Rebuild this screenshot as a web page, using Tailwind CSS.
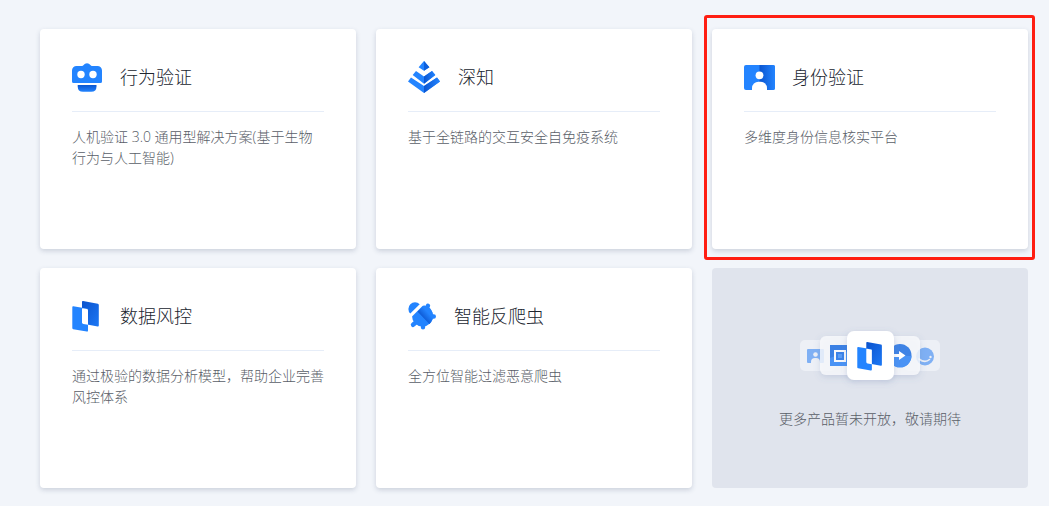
<!DOCTYPE html>
<html lang="zh-CN">
<head>
  <meta charset="UTF-8" />
  <meta name="viewport" content="width=device-width, initial-scale=1.0" />
  <title>产品列表</title>
  <script src="https://cdn.jsdelivr.net/npm/@tailwindcss/browser@4"></script>
</head>
<body class="bg-[#f2f5fa] min-h-screen font-['Open_Sans','Noto_Sans_CJK_SC',sans-serif] font-light">

  <!-- Shared gradients and the panel logo -->
  <svg class="absolute w-0 h-0" aria-hidden="true">
    <defs>
      <linearGradient id="shade" x1="0" y1="0" x2="1" y2="1">
        <stop offset="0" stop-color="#0a52cc" />
        <stop offset="1" stop-color="#1c78f5" />
      </linearGradient>
      <linearGradient id="shade-down" x1="0" y1="0" x2="0" y2="1">
        <stop offset="0" stop-color="#0b56d0" />
        <stop offset="1" stop-color="#2384ff" />
      </linearGradient>
      <linearGradient id="shade-right" x1="0" y1="0" x2="1" y2="0">
        <stop offset="0" stop-color="#0b55d0" />
        <stop offset="1" stop-color="#2384ff" />
      </linearGradient>
      <linearGradient id="shade-up" x1="0" y1="1" x2="1" y2="0">
        <stop offset=".3" stop-color="#0b55d0" />
        <stop offset=".65" stop-color="#2384ff" />
      </linearGradient>
      <clipPath id="shell"><path d="M-1 21.500L20.500 0H30v32H-1z" /></clipPath>
      <symbol id="panels" viewBox="0 0 28 32">
        <path d="M11 1l14.800 2.700q1 .2 1 1.200v20.600q0 1.100-1.100 .9L10 23.500V1.900q0-1.100 1-.9z" fill="url(#shade)" />
        <path d="M1.300 6.200L16 8.800v21.800q0 1.200-1.200 1L1.200 29.200q-.9-.2-.9-1.100V7.100q0-1 1-.9z" fill="#2384ff" />
        <path d="M10.700 8.200l4.300.8q1 .2 1 1.200v14.600l-4.600-.8q-1.400-.3-1.400-1.600V9q0-.9.700-.8z" fill="#fff" />
      </symbol>
    </defs>
  </svg>

  <!-- Product cards -->
  <main class="grid grid-cols-3 gap-x-5 gap-y-[19px] pt-[29px] pb-[18px] pl-10 pr-[21px]">

    <section class="h-[220px] bg-white rounded px-8 pt-8 shadow-[0_2px_5px_rgba(50,65,100,0.2)]">
      <div class="flex items-center gap-4 pb-[18px] border-b border-[#e6edf8]">
        <svg class="w-8 h-8" viewBox="0 0 32 32" aria-hidden="true">
          <path d="M4.500 5H10q1-.1 1.600-1a4.200 4.200 0 0 1 6.800 0q.6.900 1.600 1h5.500A4.500 4.500 0 0 1 30 9.500V20.500a1.500 1.500 0 0 1-1.500 1.500h-27A1.500 1.500 0 0 1 0 20.500V9.500A4.500 4.500 0 0 1 4.500 5z" fill="#2384ff" />
          <circle cx="9" cy="13.500" r="3.700" fill="#fff" />
          <circle cx="21" cy="13.500" r="3.700" fill="#fff" />
          <path d="M5.700 24h18.800v1.500q0 5.300-5.300 5.300H11q-5.300 0-5.300-5.300z" fill="url(#shade-down)" />
        </svg>
        <h2 class="text-lg leading-8 text-[#20242e]">行为验证</h2>
      </div>
      <p class="mt-3.5 text-sm leading-[21px] text-[#595e68]">人机验证 3.0 通用型解决方案(基于生物行为与人工智能)</p>
    </section>

    <section class="h-[220px] bg-white rounded px-8 pt-8 shadow-[0_2px_5px_rgba(50,65,100,0.2)]">
      <div class="flex items-center gap-4 pb-[18px] border-b border-[#e6edf8]">
        <svg class="w-[34px] h-8" viewBox="0 0 34 32" aria-hidden="true">
          <path d="M16 0l5.400 6.300L16 9.800l-5.400-3.500z" fill="#2384ff" />
          <path d="M8 10l8 5.500 8-5.500 3.300 4.100L16 22.800 4.700 14.100z" fill="#2384ff" />
          <path d="M3 16.600L16 25l13-8.400 3 4L16 32 0 20.600z" fill="#2384ff" />
          <path d="M16 0l5.400 6.300L16 9.800z" fill="#0d5fdc" />
          <path d="M16 15.500l8-5.500 3.300 4.100L16 22.800z" fill="url(#shade-right)" />
          <path d="M16 25l13-8.400 3 4L16 32z" fill="url(#shade-right)" />
        </svg>
        <h2 class="text-lg leading-8 text-[#20242e]">深知</h2>
      </div>
      <p class="mt-3.5 text-sm leading-[21px] text-[#595e68]">基于全链路的交互安全自免疫系统</p>
    </section>

    <section class="relative h-[220px] bg-white rounded px-8 pt-8 shadow-[0_2px_5px_rgba(50,65,100,0.2)]">
      <div class="flex items-center gap-4 pb-[18px] border-b border-[#e6edf8]">
        <svg class="w-8 h-8" viewBox="0 0 32 32" aria-hidden="true">
          <rect y="4" width="31" height="25" rx="2" fill="#2384ff" />
          <path d="M15.500 4H29q2 0 2 2v21q0 2-2 2H15.500z" fill="url(#shade-right)" />
          <circle cx="15.500" cy="14.300" r="3.900" fill="#fff" />
          <path d="M8 29v-1.800a6.500 6.500 0 0 1 6.500-6.500h2a6.500 6.500 0 0 1 6.500 6.500V29z" fill="#fff" />
        </svg>
        <h2 class="text-lg leading-8 text-[#20242e]">身份验证</h2>
      </div>
      <p class="mt-3.5 text-sm leading-[21px] text-[#595e68]">多维度身份信息核实平台</p>
      <!-- Highlight frame -->
      <div class="absolute -left-2 -top-3.5 -right-[7px] -bottom-[11px] border-3 border-[#ff1e12] rounded-[3px] pointer-events-none"></div>
    </section>

    <section class="h-[220px] bg-white rounded px-8 pt-8 shadow-[0_2px_5px_rgba(50,65,100,0.2)]">
      <div class="flex items-center gap-5 pb-[18px] border-b border-[#e6edf8]">
        <svg class="w-7 h-8" aria-hidden="true"><use href="#panels" /></svg>
        <h2 class="text-lg leading-8 text-[#20242e]">数据风控</h2>
      </div>
      <p class="mt-3.5 text-sm leading-[21px] text-[#595e68]">通过极验的数据分析模型，帮助企业完善风控体系</p>
    </section>

    <section class="h-[220px] bg-white rounded px-8 pt-8 shadow-[0_2px_5px_rgba(50,65,100,0.2)]">
      <div class="flex items-center gap-4 pb-[18px] border-b border-[#e6edf8]">
        <svg class="w-[30px] h-8" viewBox="0 0 30 32" aria-hidden="true">
          <path d="M2.300 13.600A6.300 6.300 0 1 1 11.700 4.300z" fill="#2384ff" />
          <g clip-path="url(#shell)">
            <path d="M15 16.500L20 5.700M15 16.500h10.800M15 16.500v10.800M15 16.500L5 24.800" fill="none" stroke="#2384ff" stroke-width="4.400" stroke-linecap="round" />
            <circle cx="14.500" cy="16" r="10.500" fill="#2384ff" />
            <path d="M9.500 11.500L21.400 23.900A10.500 10.500 0 0 0 16 5.600z" fill="url(#shade-up)" />
          </g>
        </svg>
        <h2 class="text-lg leading-8 text-[#20242e]">智能反爬虫</h2>
      </div>
      <p class="mt-3.5 text-sm leading-[21px] text-[#595e68]">全方位智能过滤恶意爬虫</p>
    </section>

    <!-- Coming soon -->
    <section class="h-[220px] bg-[#e0e4ed] rounded flex flex-col items-center pt-[52px]">
      <svg class="w-40 h-[70px]" viewBox="0 0 160 70" aria-hidden="true">
        <defs>
          <filter id="lift" x="-30%" y="-30%" width="160%" height="170%">
            <feDropShadow dx="0" dy="2" stdDeviation="3" flood-color="#5b74a8" flood-opacity=".25" />
          </filter>
        </defs>
        <rect x="10" y="20" width="36" height="31" rx="5" fill="#edf0f6" />
        <rect x="114" y="20" width="36" height="31" rx="5" fill="#edf0f6" />
        <g fill="#7fb0f4">
          <rect x="17" y="29" width="17" height="14" rx="1" />
          <circle cx="135" cy="36.500" r="9" />
        </g>
        <circle cx="25.500" cy="34.500" r="2.300" fill="#edf0f6" />
        <path d="M21 43v-1a4 4 0 0 1 4-4h1a4 4 0 0 1 4 4v1z" fill="#edf0f6" />
        <path d="M129 39q6 4.500 10.500 .5" fill="none" stroke="#edf0f6" stroke-width="1.600" stroke-linecap="round" />
        <circle cx="140.500" cy="37" r="1.200" fill="#edf0f6" />
        <rect x="30" y="16" width="40" height="39" rx="6" fill="#f9fafc" fill-opacity=".8" filter="url(#lift)" />
        <rect x="90" y="16" width="40" height="39" rx="6" fill="#f9fafc" fill-opacity=".8" filter="url(#lift)" />
        <rect x="40" y="25" width="21" height="21" fill="#4a93f5" />
        <path d="M40 25h21v5L40 38z" fill="#3b80e4" />
        <rect x="44" y="30" width="12" height="12" fill="#f7f8fb" />
        <rect x="46" y="32" width="8" height="8" fill="#3b82e8" />
        <rect x="48" y="34" width="4" height="4" fill="#5b9df5" />
        <circle cx="110" cy="35.500" r="11.500" fill="#3f83e5" />
        <path d="M98.500 36H121.500a11.500 11.500 0 0 1-23 0z" fill="#4a93f5" />
        <path d="M100 34h9v-3l6.500 4.500-6.500 4.500v-3h-9z" fill="#fff" />
        <rect x="57" y="11" width="47" height="49" rx="7" fill="#fff" filter="url(#lift)" />
        <use href="#panels" x="67" y="20" width="26" height="32" />
      </svg>
      <p class="mt-[18px] text-sm leading-[21px] text-[#595e68]">更多产品暂未开放，敬请期待</p>
    </section>
  </main>

</body>
</html>
